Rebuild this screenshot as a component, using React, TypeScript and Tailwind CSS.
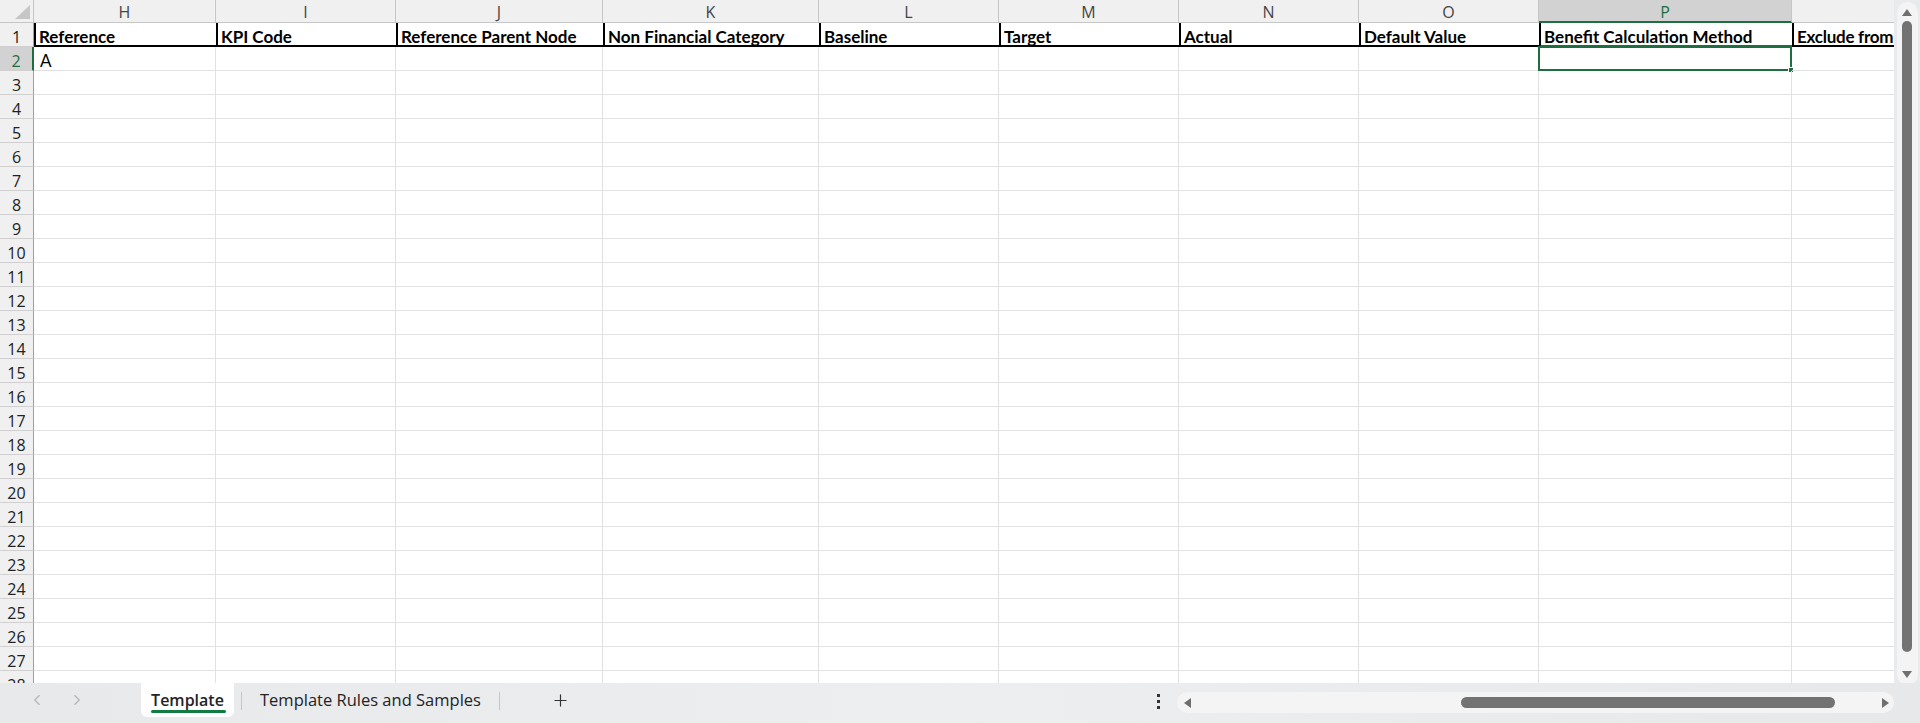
import React from 'react';
import { ChevronLeft, ChevronRight, Plus } from 'lucide-react';

interface Column {
  letter: string;
  title: string;
}

const columns: Column[] = [
  { letter: 'H', title: 'Reference' },
  { letter: 'I', title: 'KPI Code' },
  { letter: 'J', title: 'Reference Parent Node' },
  { letter: 'K', title: 'Non Financial Category' },
  { letter: 'L', title: 'Baseline' },
  { letter: 'M', title: 'Target' },
  { letter: 'N', title: 'Actual' },
  { letter: 'O', title: 'Default Value' },
  { letter: 'P', title: 'Benefit Calculation Method' },
  { letter: '', title: 'Exclude from' },
];

const rowNumbers = Array.from({ length: 28 }, (_, i) => i + 1);

const SelectedCol = 'P';

const App: React.FC = () => {
  return (
    <div className="w-[1920px] h-[723px] flex flex-col bg-[#e8eaec] overflow-hidden font-['Open_Sans',sans-serif]">
      <div className="flex h-[683px]">
        {/* Sheet grid */}
        <div className="w-[1894px] h-[683px] overflow-hidden bg-white">
          <div className="grid grid-cols-[34px_182px_180px_207px_216px_180px_180px_180px_180px_253px_260px] grid-rows-[23px] auto-rows-[24px] w-max">
            {/* Corner */}
            <div className="relative bg-[#f0f0f0] border-r border-b border-[#c6c6c6]">
              <svg className="absolute left-[15px] top-[5px]" width="15" height="14" viewBox="0 0 15 14">
                <polygon points="15,0 15,14 0,14" fill="#c6c6c6" />
              </svg>
            </div>
            {/* Column letters */}
            {columns.map((col, i) => (
              <div
                key={'h' + i}
                className={`flex items-center justify-center pt-[2px] text-[16px] leading-none border-r ${
                  col.letter === SelectedCol
                    ? 'bg-[#d2d2d2] text-[#1e6e42] border-b-2 border-b-[#1e6e42] border-r-[#c6c6c6]'
                    : 'bg-[#f0f0f0] text-[#444] border-b border-[#c6c6c6]'
                }`}
              >
                {col.letter}
              </div>
            ))}

            {rowNumbers.map((r) => (
              <React.Fragment key={r}>
                <div
                  className={`flex items-center justify-center pt-[4px] text-[16px] leading-none border-b border-b-[#d0d0d0] ${
                    r === 2
                      ? 'bg-[#d2d2d2] text-[#1e6e42] border-r-2 border-r-[#1e6e42]'
                      : 'bg-[#f0f0f0] text-[#222] border-r border-r-[#9f9f9f]'
                  }`}
                >
                  {r}
                </div>
                {columns.map((col, i) => {
                  if (r === 1) {
                    return (
                      <div
                        key={i}
                        className={`flex items-center pl-[3px] pt-[5px] border-l-2 border-l-black border-b-2 whitespace-nowrap overflow-hidden font-['Lato',sans-serif] font-bold text-[17px] leading-none text-black ${
                          col.letter === SelectedCol ? 'border-b-[#1e6e42]' : 'border-b-black'
                        } ${col.letter === '' ? 'tracking-[-0.25px]' : ''}`}
                      >
                        {col.title}
                      </div>
                    );
                  }
                  const selected = r === 2 && col.letter === SelectedCol;
                  return (
                    <div
                      key={i}
                      className="relative flex items-center pl-[6px] pt-[4px] border-r border-b border-[#e1e1e1] font-['Lato',sans-serif] text-[17px] leading-none text-black"
                    >
                      {r === 2 && i === 0 ? 'A' : ''}
                      {selected && (
                        <div className="absolute -left-[1px] -top-[1px] -right-[1px] -bottom-[1px] border-2 border-[#1e6e42]">
                          <div className="absolute -right-[4px] -bottom-[4px] w-[6px] h-[6px] bg-[#1e6e42] border border-white" />
                        </div>
                      )}
                    </div>
                  );
                })}
              </React.Fragment>
            ))}
          </div>
        </div>

        {/* Vertical scrollbar */}
        <div className="w-[26px] flex justify-center pt-[2px]">
          <div className="w-[21px] h-[683px] bg-[#f4f4f4] rounded-full flex flex-col items-center">
            <svg className="mt-[7px]" width="10" height="7" viewBox="0 0 10 7">
              <polygon points="5,0 10,7 0,7" fill="#6f6f6f" />
            </svg>
            <div className="mt-[5px] w-[10px] h-[631px] rounded-full bg-[#737373]" />
            <svg className="mt-[19px]" width="10" height="7" viewBox="0 0 10 7">
              <polygon points="0,0 10,0 5,7" fill="#6f6f6f" />
            </svg>
          </div>
        </div>
      </div>

      {/* Sheet tabs bar */}
      <div className="h-[40px] flex items-start bg-gradient-to-r from-[#e7e9eb] via-[#eceef0] to-[#e6e8ea]">
        <div className="flex items-center h-[34px] pl-[28px] gap-[22px] text-[#b3b3b3]">
          <ChevronLeft size={18} strokeWidth={1.5} />
          <ChevronRight size={18} strokeWidth={1.5} />
        </div>
        <div className="ml-[55px] h-[34px] w-[93px] bg-white rounded-b-[6px] flex flex-col items-center justify-center relative">
          <span className="text-[16px] font-semibold text-[#242424] leading-none">Template</span>
          <div className="absolute bottom-[4px] left-[10px] right-[8px] h-[3px] rounded-full bg-[#107c41]" />
        </div>
        <div className="mt-[9px] w-px h-[18px] bg-[#c4c6c8] ml-[7px]" />
        <div className="h-[34px] flex items-center px-[18px] text-[16.5px] text-[#242424]">
          Template Rules and Samples
        </div>
        <div className="mt-[9px] w-px h-[18px] bg-[#c4c6c8]" />
        <div className="h-[34px] flex items-center ml-[51px] text-[#333]">
          <Plus size={19} strokeWidth={1.5} />
        </div>
        <div className="flex-1" />
        <div className="h-[34px] flex flex-col justify-center gap-[3px] mr-[17px] mt-[1px]">
          <div className="w-[3px] h-[3px] bg-[#333]" />
          <div className="w-[3px] h-[3px] bg-[#333]" />
          <div className="w-[3px] h-[3px] bg-[#333]" />
        </div>
        <div className="mt-[9px] w-[717px] h-[21px] rounded-full bg-[#f4f4f4] flex items-center mr-[26px]">
          <svg className="ml-[7px]" width="7" height="10" viewBox="0 0 7 10">
            <polygon points="0,5 7,0 7,10" fill="#6f6f6f" />
          </svg>
          <div className="ml-[270px] w-[374px] h-[11px] rounded-full bg-[#737373]" />
          <div className="flex-1" />
          <svg className="mr-[5px]" width="7" height="10" viewBox="0 0 7 10">
            <polygon points="7,5 0,0 0,10" fill="#6f6f6f" />
          </svg>
        </div>
      </div>
    </div>
  );
};

export default App;
